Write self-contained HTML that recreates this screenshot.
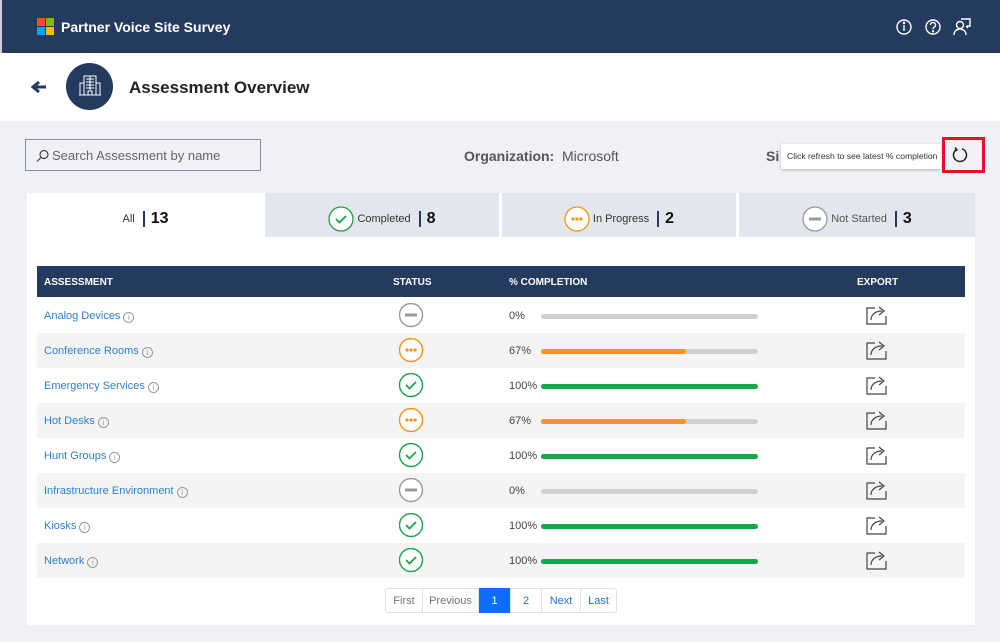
<!DOCTYPE html>
<html><head><meta charset="utf-8"><style>
*{margin:0;padding:0;box-sizing:border-box}
body{width:1000px;height:642px;overflow:hidden;background:#f0f1f6;font-family:"Liberation Sans",sans-serif;position:relative;color:#333}
.a{position:absolute}
.hdr{left:0;top:0;width:1000px;height:53px;background:#243a5e;border-left:2px solid #ccd;}
.band{left:0;top:53px;width:1000px;height:68px;background:#fff}
.tab{top:193px;height:44px;padding-top:7px;background:#e3e6ec;display:flex;align-items:center;justify-content:center;font-size:11px;color:#333}
.tab b{font-size:16px;color:#111;margin-left:6px}
.sep{display:inline-block;width:2px;height:16px;background:#243a5e;margin-left:8px}
.row{left:37px;width:928px;height:35px;font-size:11px}
.nm{position:absolute;left:7px;top:12px;color:#2d7fd3}
.nm i{display:inline-block;width:11px;height:11px;border:1px solid #999;border-radius:50%;font-size:8px;color:#999;text-align:center;line-height:9px;font-style:normal;margin-left:3px;vertical-align:-1px}
.st{position:absolute;left:362px;top:5px}
.pc{position:absolute;left:472px;top:12px;color:#444}
.bar{position:absolute;left:504px;top:16px;width:217px;height:5px;border-radius:3px;background:#d0d0d0}
.bar span{display:block;height:5px;border-radius:3px}
.ex{position:absolute;left:828px;top:6px}
.pg{top:588px;height:25px;border:1px solid #dee2e6;font-size:11px;display:flex;align-items:center;justify-content:center;color:#1a73e8;background:#fff}
</style></head><body>
<div class="a hdr"></div>
<div class="a" style="left:37px;top:18px;width:18px;height:18px">
<div class="a" style="left:0;top:0;width:8px;height:8px;background:#f25022"></div>
<div class="a" style="left:9px;top:0;width:8px;height:8px;background:#7fba00"></div>
<div class="a" style="left:0;top:9px;width:8px;height:8px;background:#00a4ef"></div>
<div class="a" style="left:9px;top:9px;width:8px;height:8px;background:#ffb900"></div>
</div>
<div class="a" style="left:61px;top:19px;color:#fff;font-weight:bold;font-size:14px">Partner Voice Site Survey</div>
<svg class="a" style="left:895px;top:18px" width="80" height="20" fill="none" stroke="#fff" stroke-width="1.4">
<circle cx="9" cy="9" r="7"/><line x1="9" y1="7" x2="9" y2="13"/><circle cx="9" cy="4.8" r=".6" fill="#fff"/>
<circle cx="38" cy="9" r="7"/><path d="M35.5 7a2.5 2.5 0 1 1 3.5 2.2c-1 .5-1 1-1 2"/><circle cx="38" cy="13.3" r=".5" fill="#fff"/>
<circle cx="65" cy="7" r="3.5"/><path d="M59 17c0-4 3-6 6-6s6 2 6 6"/><path d="M66 1h9v7h-3"/><path d="M71 8l2 2"/>
</svg>
<div class="a band"></div>
<svg class="a" style="left:30px;top:80px" width="18" height="14"><path d="M16 7H4M9 2L3 7l6 5" stroke="#243a5e" stroke-width="3" fill="none"/></svg>
<div class="a" style="left:66px;top:63px;width:47px;height:47px;border-radius:50%;background:#243a5e"></div>
<svg class="a" style="left:78px;top:74px" width="24" height="24" fill="none" stroke="#fff" stroke-width="1"><rect x="6" y="2" width="12" height="19"/><rect x="2" y="9" width="4" height="12"/><rect x="18" y="9" width="4" height="12"/><path d="M8 5h8M8 8h8M8 11h8M8 14h8M10 21v-4h4v4M12 2v14"/><path d="M1 21h22"/></svg>
<div class="a" style="left:129px;top:78px;font-size:17px;font-weight:bold;color:#222">Assessment Overview</div>
<div class="a" style="left:25px;top:139px;width:236px;height:32px;border:1px solid #8a8fa0;background:#f0f1f6"></div>
<svg class="a" style="left:36px;top:149px" width="14" height="14" fill="none" stroke="#444" stroke-width="1.2"><circle cx="8" cy="5.5" r="4"/><path d="M5 8.5L1 12.5"/></svg>
<div class="a" style="left:52px;top:148px;font-size:13px;color:#666">Search Assessment by name</div>
<div class="a" style="left:464px;top:148px;font-size:14px;color:#555"><b>Organization:</b>&nbsp; Microsoft</div>
<div class="a" style="left:766px;top:148px;font-size:14px;color:#555;font-weight:bold">Si</div>
<div class="a" style="left:781px;top:144px;width:160px;height:25px;background:#fff;box-shadow:0 1px 3px rgba(0,0,0,.25);font-size:8.6px;color:#333;line-height:25px;padding-left:6px;white-space:nowrap">Click refresh to see latest % completion</div>
<div class="a" style="left:940px;top:152px;width:0;height:0;border-top:6px solid transparent;border-bottom:6px solid transparent;border-left:6px solid #fff"></div>
<div class="a" style="left:942px;top:137px;width:43px;height:36px;border:3px solid #e81123"></div>
<svg class="a" style="left:951px;top:146px" width="18" height="18" fill="none" stroke="#222" stroke-width="1.5"><path d="M5.5 3.5A6.5 6.5 0 1 0 11 2.8"/><path d="M4 1.5l2 2.3-2.3 1.5"/></svg>
<div class="a" style="left:27px;top:193px;width:948px;height:432px;background:#fff"></div>
<div class="a tab" style="left:27px;width:237px;background:#fff">All<span class="sep"></span><b>13</b></div>
<div class="a tab" style="left:265px;width:234px"><svg width="26" height="26" style="margin-right:3px"><circle cx="13" cy="13" r="12" fill="#fff" stroke="#1aa34a" stroke-width="1.3"/><path d="M8 13l3.5 3.5L18 10" stroke="#1aa34a" stroke-width="1.8" fill="none"/></svg>Completed<span class="sep"></span><b>8</b></div>
<div class="a tab" style="left:502px;width:234px"><svg width="26" height="26" style="margin-right:3px"><circle cx="13" cy="13" r="12" fill="#fff" stroke="#f7930e" stroke-width="1.3"/><circle cx="9" cy="13" r="1.6" fill="#f7930e"/><circle cx="13" cy="13" r="1.6" fill="#f7930e"/><circle cx="17" cy="13" r="1.6" fill="#f7930e"/></svg>In Progress<span class="sep"></span><b>2</b></div>
<div class="a tab" style="left:739px;width:236px;color:#555"><svg width="26" height="26" style="margin-right:3px"><circle cx="13" cy="13" r="12" fill="#fff" stroke="#999" stroke-width="1.3"/><path d="M7 13h12" stroke="#999" stroke-width="3"/></svg>Not Started<span class="sep"></span><b>3</b></div>
<div class="a" style="left:37px;top:266px;width:928px;height:31px;background:#243a5e;color:#fff;font-size:10px;font-weight:bold">
<span class="a" style="left:7px;top:11px">ASSESSMENT</span><span class="a" style="left:356px;top:11px">STATUS</span><span class="a" style="left:472px;top:11px">% COMPLETION</span><span class="a" style="left:820px;top:11px">EXPORT</span></div>
<div id="rows"></div>
<div class="a pg" style="left:385px;width:38px;color:#6c757d;border-radius:3px 0 0 3px">First</div>
<div class="a pg" style="left:422px;width:57px;color:#6c757d">Previous</div>
<div class="a pg" style="left:479px;width:31px;background:#0d6efd;color:#fff;border-color:#0d6efd">1</div>
<div class="a pg" style="left:510px;width:32px">2</div>
<div class="a pg" style="left:541px;width:40px">Next</div>
<div class="a pg" style="left:580px;width:37px;border-radius:0 3px 3px 0">Last</div>
<script>
var d=[["Analog Devices",0],["Conference Rooms",67],["Emergency Services",100],["Hot Desks",67],["Hunt Groups",100],["Infrastructure Environment",0],["Kiosks",100],["Network",100]];
var ic={0:'<circle cx="12" cy="12" r="11.5" fill="#fff" stroke="#999" stroke-width="1.4"/><path d="M6 12h12" stroke="#999" stroke-width="3"/>',67:'<circle cx="12" cy="12" r="11.5" fill="#fff" stroke="#f7930e" stroke-width="1.4"/><circle cx="8" cy="12" r="1.6" fill="#f7930e"/><circle cx="12" cy="12" r="1.6" fill="#f7930e"/><circle cx="16" cy="12" r="1.6" fill="#f7930e"/>',100:'<circle cx="12" cy="12" r="11.5" fill="#fff" stroke="#1aa34a" stroke-width="1.4"/><path d="M7 12l3.5 3.5L17 9" stroke="#1aa34a" stroke-width="1.8" fill="none"/>'};
var col={0:'#d0d0d0',67:'#f7931e',100:'#12a84b'};
var h='';d.forEach(function(r,i){h+='<div class="a row" style="top:'+(298+i*35)+'px;background:'+(i%2?'#f4f4f4':'#fff')+'"><span class="nm">'+r[0]+'<i>i</i></span><svg class="st" width="25" height="25">'+ic[r[1]]+'</svg><span class="pc">'+r[1]+'%</span><div class="bar"><span style="width:'+r[1]+'%;background:'+col[r[1]]+'"></span></div><svg class="ex" width="24" height="22" fill="none" stroke="#444" stroke-width="1.2"><path d="M10 4H2v16h19v-8"/><path d="M6 16c0-5 4-9 11-9"/><path d="M14 3l5 4-5 4"/></svg></div>'});
document.getElementById('rows').innerHTML=h;
</script>
</body></html>
